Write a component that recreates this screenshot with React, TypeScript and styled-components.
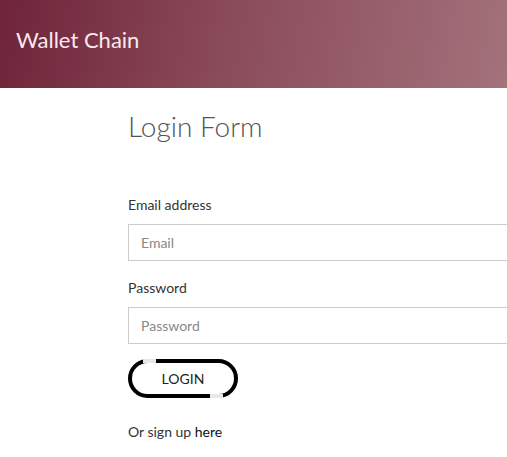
import styled, { createGlobalStyle } from "styled-components";

const GlobalStyle = createGlobalStyle`
  html, body {
    margin: 0;
    padding: 0;
    background: #fff;
    overflow: hidden;
    font-family: Lato, "Liberation Sans", sans-serif;
  }
`;

const Header = styled.header`
  height: 88px;
  box-sizing: border-box;
  display: flex;
  align-items: center;
  padding: 0 16px 10px;
  background: linear-gradient(100deg, #6f2439 0%, #8a4b5a 45%, #a3727b 100%);
`;

const Brand = styled.h1`
  margin: 0;
  font-size: 22px;
  font-weight: 400;
  color: #fbe9f1;
`;

const Main = styled.main`
  padding: 18px 0 0 128px;
`;

const Title = styled.h2`
  margin: 0 0 49px;
  font-size: 28px;
  font-weight: 300;
  color: #555;
  line-height: 40px;
`;

const Form = styled.form`
  width: 420px;
  display: flex;
  flex-direction: column;
`;

const Label = styled.label`
  font-size: 14px;
  color: #333;
  line-height: 20px;
  margin-bottom: 9px;
`;

const Input = styled.input`
  box-sizing: border-box;
  height: 37px;
  padding: 0 12px;
  border: 1px solid #ccc;
  font-family: inherit;
  font-size: 14px;
  color: #333;
  margin-bottom: 17px;
  &::placeholder {
    color: #888;
  }
`;

const Button = styled.button`
  position: relative;
  box-sizing: border-box;
  width: 110px;
  height: 39px;
  margin-top: -2px;
  border: 4px solid #000;
  border-radius: 20px;
  background: #fff;
  font-family: inherit;
  font-size: 14px;
  color: #222;
  &::before,
  &::after {
    content: "";
    position: absolute;
    width: 13px;
    height: 4px;
    background: #e8e8e8;
  }
  &::before {
    top: -4px;
    left: 11px;
  }
  &::after {
    bottom: -4px;
    right: 11px;
  }
`;

const Signup = styled.p`
  margin: 25px 0 0;
  font-size: 14px;
  color: #333;
`;

const Link = styled.a`
  color: #111;
  text-decoration: none;
`;

export default function App() {
  return (
    <>
      <GlobalStyle />
      <Header>
        <Brand>Wallet Chain</Brand>
      </Header>
      <Main>
        <Title>Login Form</Title>
        <Form onSubmit={(e) => e.preventDefault()}>
          <Label htmlFor="email">Email address</Label>
          <Input id="email" type="email" placeholder="Email" />
          <Label htmlFor="password">Password</Label>
          <Input id="password" type="password" placeholder="Password" />
          <div>
            <Button type="submit">LOGIN</Button>
          </div>
        </Form>
        <Signup>
          Or sign up <Link href="#">here</Link>
        </Signup>
      </Main>
    </>
  );
}
